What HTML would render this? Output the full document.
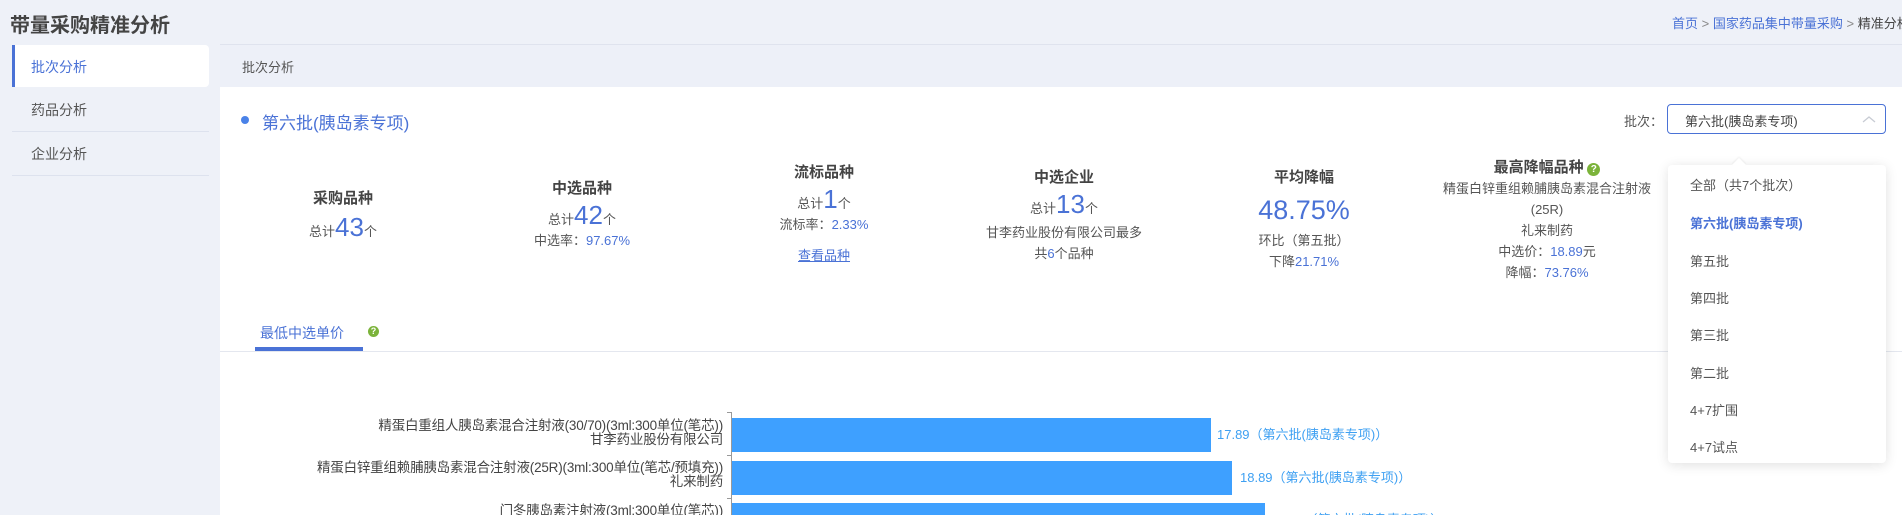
<!DOCTYPE html>
<html style="width:1902px;height:515px;overflow:hidden"><head><meta charset="utf-8"><style>
*{margin:0;padding:0;box-sizing:border-box}
body{width:1902px;height:515px;overflow:hidden;background:#eef1f8;font-family:"Liberation Sans","Noto Sans CJK SC",sans-serif;color:#555;position:relative}
.a{position:absolute;white-space:nowrap}
.blue{color:#4a72d6}
.c{position:absolute;text-align:center;transform:translateX(-50%);white-space:nowrap;font-size:13px;color:#555;line-height:21px}
.c b{display:block;font-size:15px;color:#444;font-weight:bold}
.big{font-size:26px;color:#4a72d6}
.lbl{position:absolute;right:1179px;text-align:right;font-size:13.5px;color:#444;line-height:14px;white-space:nowrap;letter-spacing:-0.2px}
.bar{position:absolute;left:732px;background:#3ea0ff;height:34px}
.val{position:absolute;font-size:13px;color:#3ea0f2;white-space:nowrap}
.dd div{position:absolute;left:22px;font-size:13px;color:#555}
.q{display:inline-block;width:13px;height:13px;border-radius:50%;background:#7bb33a;color:#fff;font-size:10px;line-height:13px;text-align:center;font-weight:bold}
</style></head><body>
<div class="a" style="left:10px;top:9px;font-size:20px;font-weight:bold;color:#444">带量采购精准分析</div>
<div class="a" style="left:1672px;top:13px;font-size:13px"><span class="blue">首页</span> <span style="color:#888">&gt;</span> <span class="blue">国家药品集中带量采购</span> <span style="color:#888">&gt;</span> <span style="color:#444">精准分析</span></div>

<div class="a" style="left:12px;top:45px;width:197px;height:42px;background:#fff;border-left:3px solid #4a72d6;border-radius:0 4px 4px 0"></div>
<div class="a blue" style="left:31px;top:57px;font-size:14px">批次分析</div>
<div class="a" style="left:31px;top:100px;font-size:14px;color:#555">药品分析</div>
<div class="a" style="left:12px;top:131px;width:197px;height:1px;background:#dde2ee"></div>
<div class="a" style="left:31px;top:144px;font-size:14px;color:#555">企业分析</div>
<div class="a" style="left:12px;top:175px;width:197px;height:1px;background:#dde2ee"></div>

<div class="a" style="left:220px;top:44px;width:1682px;height:1px;background:#dfe3ee"></div>
<div class="a" style="left:220px;top:45px;width:1682px;height:42px;background:#edf0f8"></div>
<div class="a" style="left:242px;top:57px;font-size:13px;color:#555">批次分析</div>
<div class="a" style="left:220px;top:87px;width:1682px;height:428px;background:#fff"></div>

<div class="a" style="left:241px;top:116px;width:8px;height:8px;border-radius:50%;background:#4a82e8"></div>
<div class="a blue" style="left:262px;top:109px;font-size:17px">第六批(胰岛素专项)</div>

<div class="a" style="left:1624px;top:111px;font-size:13px;color:#555">批次：</div>
<div class="a" style="left:1667px;top:104px;width:219px;height:30px;border:1px solid #4a72d6;border-radius:4px"></div>
<div class="a" style="left:1685px;top:111px;font-size:13px;color:#444">第六批(胰岛素专项)</div>
<svg class="a" style="left:1862px;top:115px" width="14" height="9"><path d="M1 7L7 2L13 7" fill="none" stroke="#c8ccd4" stroke-width="1.3"/></svg>

<div class="c" style="left:343px;top:188px"><b>采购品种</b><div style="margin-top:8px">总计<span class="big">43</span>个</div></div>
<div class="c" style="left:582px;top:178px"><b>中选品种</b><div style="margin-top:6px">总计<span class="big">42</span>个</div><div>中选率：<span class="blue">97.67%</span></div></div>
<div class="c" style="left:824px;top:162px"><b>流标品种</b><div style="margin-top:6px">总计<span class="big">1</span>个</div><div>流标率：<span class="blue">2.33%</span></div><div style="margin-top:10px;text-decoration:underline" class="blue">查看品种</div></div>
<div class="c" style="left:1064px;top:167px"><b>中选企业</b><div style="margin-top:6px">总计<span class="big">13</span>个</div><div style="margin-top:3px">甘李药业股份有限公司最多</div><div>共<span class="blue">6</span>个品种</div></div>
<div class="c" style="left:1304px;top:167px"><b>平均降幅</b><div style="margin-top:4px;font-size:27px;line-height:36px" class="blue">48.75%</div><div style="margin-top:2px">环比（第五批）</div><div>下降<span class="blue">21.71%</span></div></div>
<div class="c" style="left:1547px;top:157px"><b style="display:inline">最高降幅品种</b> <span class="q">?</span><div>精蛋白锌重组赖脯胰岛素混合注射液</div><div>(25R)</div><div>礼来制药</div><div>中选价：<span class="blue">18.89</span>元</div><div>降幅：<span class="blue">73.76%</span></div></div>

<div class="a blue" style="left:260px;top:323px;font-size:14px">最低中选单价</div>
<div class="a q" style="left:368px;top:326px;width:11px;height:11px;font-size:9px;line-height:11px;position:absolute">?</div>
<div class="a" style="left:220px;top:351px;width:1682px;height:1px;background:#e4e7ef"></div>
<div class="a" style="left:255px;top:347px;width:108px;height:4px;background:#4a72d6"></div>

<div class="a" style="left:731px;top:412px;width:1px;height:103px;background:#999"></div>
<div class="a" style="left:727px;top:412px;width:4px;height:1px;background:#999"></div>
<div class="a" style="left:727px;top:455px;width:4px;height:1px;background:#999"></div>
<div class="a" style="left:727px;top:498px;width:4px;height:1px;background:#999"></div>

<div class="lbl" style="top:419px">精蛋白重组人胰岛素混合注射液(30/70)(3ml:300单位(笔芯))<br>甘李药业股份有限公司</div>
<div class="bar" style="top:418px;width:479px"></div>
<div class="val" style="left:1217px;top:424px">17.89（第六批(胰岛素专项)）</div>

<div class="lbl" style="top:461px">精蛋白锌重组赖脯胰岛素混合注射液(25R)(3ml:300单位(笔芯/预填充))<br>礼来制药</div>
<div class="bar" style="top:461px;width:500px"></div>
<div class="val" style="left:1240px;top:467px">18.89（第六批(胰岛素专项)）</div>

<div class="lbl" style="top:504px">门冬胰岛素注射液(3ml:300单位(笔芯))</div>
<div class="bar" style="top:503px;width:533px;height:12px"></div>
<div class="val" style="left:1272px;top:509px">19.69（第六批(胰岛素专项)）</div>

<div class="a dd" style="left:1668px;top:165px;width:218px;height:298px;background:#fff;border-radius:4px;box-shadow:0 2px 12px rgba(0,0,0,0.12)">
<div style="top:10px">全部（共7个批次）</div>
<div style="top:48px;color:#4a72d6;font-weight:bold">第六批(胰岛素专项)</div>
<div style="top:86px">第五批</div>
<div style="top:123px">第四批</div>
<div style="top:160px">第三批</div>
<div style="top:198px">第二批</div>
<div style="top:235px">4+7扩围</div>
<div style="top:272px">4+7试点</div>
</div>
<div class="a" style="left:1734px;top:160px;width:10px;height:10px;background:#fff;transform:rotate(45deg);box-shadow:-1px -1px 2px rgba(0,0,0,0.06)"></div>
</body></html>
